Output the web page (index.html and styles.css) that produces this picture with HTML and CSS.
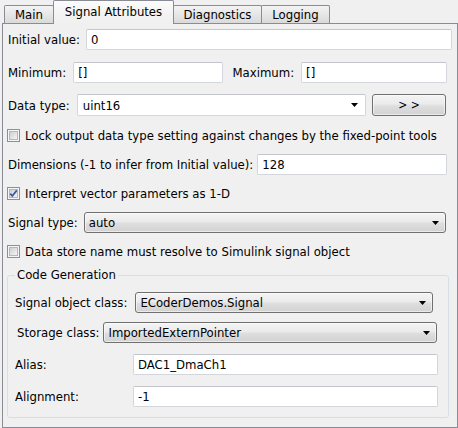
FILE: index.html
```html
<!DOCTYPE html>
<html>
<head>
<meta charset="utf-8">
<link rel="stylesheet" href="styles.css">
</head>
<body>
<div class="tabs">
  <div class="tab t-main">Main</div>
  <div class="tab sel t-sig">Signal Attributes</div>
  <div class="tab t-diag">Diagnostics</div>
  <div class="tab t-log">Logging</div>
</div>
<div class="panel">
  <div class="row r-init">
    <span class="lbl">Initial value:</span>
    <div class="field grow">0</div>
  </div>
  <div class="row r-minmax">
    <div class="half">
      <span class="lbl">Minimum:</span>
      <div class="field grow">[]</div>
    </div>
    <div class="half">
      <span class="lbl">Maximum:</span>
      <div class="field grow">[]</div>
    </div>
  </div>
  <div class="row r-dtype">
    <span class="lbl">Data type:</span>
    <div class="field combo-edit grow"><span>uint16</span><svg class="arrow" width="7" height="4" viewBox="0 0 7 4"><path d="M0 0H7L3.5 4Z" fill="#000"/></svg></div>
    <div class="btn">&gt; &gt;</div>
  </div>
  <div class="check r-lock">
    <svg class="cb" width="13" height="13" viewBox="0 0 13 13"><defs><linearGradient id="g1" x1="0" y1="0" x2="1" y2="1"><stop offset="0" stop-color="#c9ccd1"/><stop offset="1" stop-color="#f7f7f7"/></linearGradient></defs><rect x=".5" y=".5" width="12" height="12" fill="#f6f6f6" stroke="#8f8f8f"/><rect x="2.5" y="2.5" width="8" height="8" fill="url(#g1)" stroke="#b4b8be"/></svg>
    <span>Lock output data type setting against changes by the fixed-point tools</span>
  </div>
  <div class="row r-dim">
    <span class="lbl">Dimensions (-1 to infer from Initial value):</span>
    <div class="field grow">128</div>
  </div>
  <div class="check r-interp">
    <svg class="cb" width="13" height="13" viewBox="0 0 13 13"><defs><linearGradient id="g2" x1="0" y1="0" x2="1" y2="1"><stop offset="0" stop-color="#c9ccd1"/><stop offset="1" stop-color="#f7f7f7"/></linearGradient></defs><rect x=".5" y=".5" width="12" height="12" fill="#f6f6f6" stroke="#8f8f8f"/><rect x="2.5" y="2.5" width="8" height="8" fill="url(#g2)" stroke="#b4b8be"/><path d="M3.3 6.6L5.3 9L9.8 3.4" fill="none" stroke="#3f55a0" stroke-width="1.7"/></svg>
    <span>Interpret vector parameters as 1-D</span>
  </div>
  <div class="row r-stype">
    <span class="lbl">Signal type:</span>
    <div class="combo grow"><span>auto</span><svg class="arrow" width="7" height="4" viewBox="0 0 7 4"><path d="M0 0H7L3.5 4Z" fill="#000"/></svg></div>
  </div>
  <div class="check r-store">
    <svg class="cb" width="13" height="13" viewBox="0 0 13 13"><defs><linearGradient id="g3" x1="0" y1="0" x2="1" y2="1"><stop offset="0" stop-color="#c9ccd1"/><stop offset="1" stop-color="#f7f7f7"/></linearGradient></defs><rect x=".5" y=".5" width="12" height="12" fill="#f6f6f6" stroke="#8f8f8f"/><rect x="2.5" y="2.5" width="8" height="8" fill="url(#g3)" stroke="#b4b8be"/></svg>
    <span>Data store name must resolve to Simulink signal object</span>
  </div>
  <fieldset class="group">
    <legend>Code Generation</legend>
    <div class="row g-soc">
      <span class="lbl">Signal object class:</span>
      <div class="combo grow"><span>ECoderDemos.Signal</span><svg class="arrow" width="7" height="4" viewBox="0 0 7 4"><path d="M0 0H7L3.5 4Z" fill="#000"/></svg></div>
    </div>
    <div class="row g-sc">
      <span class="lbl">Storage class:</span>
      <div class="combo grow"><span>ImportedExternPointer</span><svg class="arrow" width="7" height="4" viewBox="0 0 7 4"><path d="M0 0H7L3.5 4Z" fill="#000"/></svg></div>
    </div>
    <div class="grid-row g-alias">
      <span class="lbl">Alias:</span>
      <div class="field">DAC1_DmaCh1</div>
    </div>
    <div class="grid-row g-align">
      <span class="lbl">Alignment:</span>
      <div class="field">-1</div>
    </div>
  </fieldset>
</div>
</body>
</html>
```

FILE: styles.css
```css
* { box-sizing: border-box; }
html, body { margin: 0; padding: 0; }
body {
  width: 458px;
  height: 428px;
  overflow: hidden;
  background: #f0f0f0;
  font-family: "DejaVu Sans Condensed", "DejaVu Sans", sans-serif;
  font-size: 13px;
  color: #000;
}

/* tabs */
.tabs {
  display: flex;
  align-items: flex-end;
  height: 23px;
  padding-left: 4px;
  position: relative;
  z-index: 1;
}
.tab {
  height: 18px;
  margin-right: -1px;
  border: 1px solid #898c95;
  border-bottom: none;
  border-radius: 2px 2px 0 0;
  display: flex;
  align-items: center;
  justify-content: center;
  white-space: nowrap;
  background: linear-gradient(#f3f3f3, #e6e6e6 50%, #dadada);
}
.tab.sel {
  height: 24px;
  margin-bottom: -1px;
  padding-bottom: 2px;
  position: relative;
  z-index: 2;
  background: linear-gradient(#fcfcfc, #f2f2f2 60%, #f0f0f0);
}
.t-main { width: 50px; }
.t-sig { width: 121px; }
.t-diag { width: 89px; }
.t-log { width: 69px; }

/* panel */
.panel {
  margin-left: 2px;
  width: 456px;
  height: 405px;
  border: 1px solid #898c95;
  padding-top: 5px;
  display: flex;
  flex-direction: column;
}

.row {
  display: flex;
  align-items: center;
  gap: 6px;
  padding-left: 5px;
  flex: none;
}
.lbl { white-space: nowrap; flex: none; }
.grow { flex: 1; min-width: 0; }

.field {
  height: 21px;
  background: #fff;
  border: 1px solid #d3d6db;
  border-top-color: #c3c6cc;
  border-radius: 2px;
  padding-left: 4px;
  display: flex;
  align-items: center;
  white-space: nowrap;
}
.combo-edit {
  height: 22px;
  justify-content: space-between;
  padding: 0 7px 0 5px;
}
.combo {
  height: 21px;
  border: 1px solid #707070;
  border-radius: 3px;
  background: linear-gradient(#f4f4f4, #ebebeb 45%, #dedede 55%, #d2d2d2);
  box-shadow: inset 0 0 0 1px rgba(255, 255, 255, 0.55);
  display: flex;
  align-items: center;
  justify-content: space-between;
  padding: 0 6px 0 4px;
  white-space: nowrap;
}
.arrow { flex: none; }
.btn {
  width: 74px;
  height: 22px;
  flex: none;
  border: 1px solid #707070;
  border-radius: 3px;
  background: linear-gradient(#f4f4f4, #ebebeb 45%, #dedede 55%, #d2d2d2);
  box-shadow: inset 0 0 0 1px rgba(255, 255, 255, 0.55);
  display: flex;
  align-items: center;
  justify-content: center;
  font-size: 12px;
}

.check {
  display: flex;
  align-items: center;
  gap: 5px;
  padding-left: 4px;
  height: 13px;
  white-space: nowrap;
  flex: none;
}
.cb { flex: none; display: block; }

/* vertical rhythm */
.r-init { height: 21px; padding-right: 5px; }
.r-minmax { height: 21px; margin-top: 12px; padding-right: 10px; gap: 10px; }
.half { flex: 1; display: flex; align-items: center; gap: 7px; min-width: 0; }
.r-dtype { height: 22px; margin-top: 11px; padding-right: 11px; gap: 7px; }
.r-dtype .btn { margin-left: -1px; }
.r-lock { margin-top: 13px; }
.r-dim { height: 22px; margin-top: 11px; padding-right: 10px; gap: 4px; }
.r-interp { margin-top: 12px; }
.r-stype { height: 21px; margin-top: 12px; padding-right: 11px; gap: 6px; }
.r-store { margin-top: 12px; }

/* group */
.group {
  margin: 9px 8px 0 4px;
  border: 1px solid #d5dfe5;
  border-radius: 3px;
  padding: 0 0 10px 7px;
  min-width: 0;
  flex: none;
}
.group legend {
  padding: 0 2px;
  line-height: 16px;
  margin-left: 0;
}
.g-soc { height: 21px; margin-top: 9px; padding-left: 0; padding-right: 15px; gap: 8px; }
.g-sc { height: 21px; margin-top: 9px; padding-left: 2px; padding-right: 11px; gap: 4px; }
.grid-row {
  display: grid;
  grid-template-columns: 118px 1fr;
  align-items: center;
  height: 21px;
  padding-right: 10px;
}
.grid-row .field { height: 21px; }
.g-alias { margin-top: 11px; }
.g-align { margin-top: 11px; }
```
